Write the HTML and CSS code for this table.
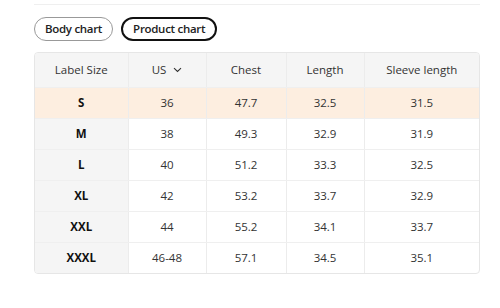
FILE: index.html
```html
<!DOCTYPE html>
<html>
<head>
<meta charset="utf-8">
<link rel="stylesheet" href="styles.css">
</head>
<body>
<div class="page">
  <div class="divider"></div>
  <div class="tabs">
    <button class="tab">Body chart</button>
    <button class="tab active">Product chart</button>
  </div>
  <div class="table-wrap">
    <table class="size-table">
      <colgroup>
        <col class="c1"><col class="c2"><col class="c3"><col class="c4"><col class="c5">
      </colgroup>
      <thead>
        <tr>
          <th>Label Size</th>
          <th><span class="unit">US <svg class="chev" width="9" height="6" viewBox="0 0 9 6"><path d="M1 1.2 L4.5 4.5 L8 1.2" fill="none" stroke="#333" stroke-width="1.1"/></svg></span></th>
          <th>Chest</th>
          <th>Length</th>
          <th>Sleeve length</th>
        </tr>
      </thead>
      <tbody>
        <tr class="hl"><td class="lbl">S</td><td>36</td><td>47.7</td><td>32.5</td><td>31.5</td></tr>
        <tr><td class="lbl">M</td><td>38</td><td>49.3</td><td>32.9</td><td>31.9</td></tr>
        <tr><td class="lbl">L</td><td>40</td><td>51.2</td><td>33.3</td><td>32.5</td></tr>
        <tr><td class="lbl">XL</td><td>42</td><td>53.2</td><td>33.7</td><td>32.9</td></tr>
        <tr><td class="lbl">XXL</td><td>44</td><td>55.2</td><td>34.1</td><td>33.7</td></tr>
        <tr><td class="lbl">XXXL</td><td>46-48</td><td>57.1</td><td>34.5</td><td>35.1</td></tr>
      </tbody>
    </table>
  </div>
</div>
</body>
</html>
```
FILE: styles.css
```css
* { box-sizing: border-box; }
html, body { margin: 0; padding: 0; background: #fff; }
body {
  font-family: "Open Sans", "Noto Sans", sans-serif;
  color: #222;
  font-size: 11.5px;
}
.page {
  padding: 4px 0 0 34px;
  width: 480px;
}
.divider {
  border-top: 1px solid #efefef;
  width: 446px;
}
.tabs {
  display: flex;
  gap: 8px;
  margin-top: 12px;
}
.tab {
  font-family: inherit;
  font-size: 11.5px;
  font-weight: 600;
  letter-spacing: -0.3px;
  color: #222;
  background: #fff;
  border: 1px solid #999;
  border-radius: 12px;
  height: 24px;
  padding: 0 10px;
  line-height: 20px;
}
.tab.active {
  border: 2px solid #111;
  padding: 0 10px;
}
.table-wrap {
  margin-top: 11px;
  width: 446px;
  border: 1px solid #e6e6e6;
  border-radius: 4px;
  overflow: hidden;
}
.size-table {
  width: 100%;
  border-collapse: collapse;
  table-layout: fixed;
}
.c1 { width: 93px; }
.c2 { width: 78px; }
.c3 { width: 80px; }
.c4 { width: 78px; }
.c5 { width: auto; }
.size-table th,
.size-table td {
  text-align: center;
  padding: 0;
  border-right: 1px solid #ececec;
  border-bottom: 1px solid #efefef;
}
.size-table th:last-child,
.size-table td:last-child { border-right: none; }
.size-table tbody tr:last-child td { border-bottom: none; }
.size-table th {
  height: 34px;
  background: #f5f5f5;
  font-weight: 400;
  color: #333;
}
.size-table td {
  height: 31px;
  color: #333;
}
.size-table td.lbl {
  background: #f5f5f5;
  font-weight: 700;
  color: #111;
}
.size-table tr.hl td { background: #fdeee0; }
.unit { display: inline-flex; align-items: center; gap: 7px; }
.chev { display: block; }
```
